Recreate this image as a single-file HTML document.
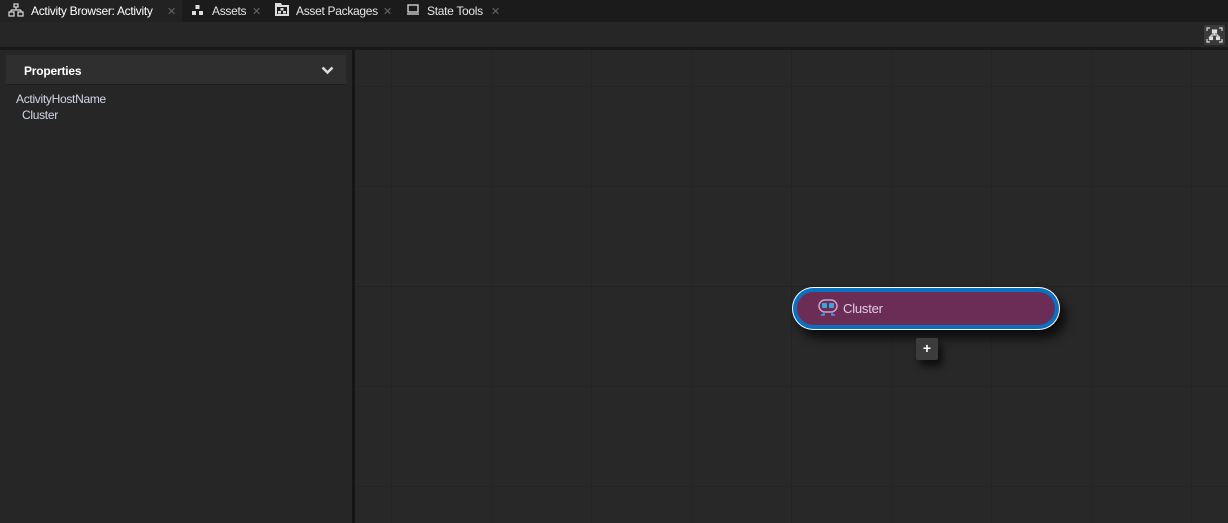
<!DOCTYPE html><html><head><style>
body{margin:0;width:1228px;height:523px;background:#262626;font-family:"Liberation Sans",sans-serif;overflow:hidden;position:relative;color:#ddd}
div{position:absolute;box-sizing:border-box}
.t{font-size:12px;top:4px;color:#e6e6e6;letter-spacing:-0.3px}
.x{font-size:11px;color:#666;top:5px}
</style></head><body>
<div style="left:0;top:0;width:1228px;height:22px;background:#1b1b1b"></div>
<div style="left:0;top:0;width:182px;height:22px;background:#222"></div>
<svg style="position:absolute;left:8px;top:3px" width="16" height="15" viewBox="0 0 16 15" fill="none" stroke="#ddd" stroke-width="1.2"><rect x="6" y="1" width="4" height="3"/><path d="M8 4v3M3 7h10M3 7v2M13 7v2"/><rect x="1" y="9" width="5" height="4"/><rect x="10" y="9" width="5" height="4"/></svg>
<div class="t" style="left:31px;color:#fff">Activity Browser: Activity</div>
<div class="x" style="left:167px">✕</div>
<svg style="position:absolute;left:192px;top:5px" width="11" height="11" viewBox="0 0 11 11" fill="#ddd"><rect x="3.5" y="0" width="4" height="4"/><rect x="0" y="6" width="4" height="4"/><rect x="7" y="6" width="4" height="4"/></svg>
<div class="t" style="left:212px">Assets</div>
<div class="x" style="left:252px">✕</div>
<svg style="position:absolute;left:275px;top:3px" width="14" height="13" viewBox="0 0 14 13" fill="#ddd"><path d="M0 0h6l1 2h7v11H0z"/><rect x="2" y="4" width="10" height="7" fill="#1b1b1b"/><rect x="5.5" y="5" width="3" height="2.5"/><rect x="3" y="8" width="3" height="2.5"/><rect x="8" y="8" width="3" height="2.5"/></svg>
<div class="t" style="left:296px">Asset Packages</div>
<div class="x" style="left:383px">✕</div>
<svg style="position:absolute;left:407px;top:4px" width="12" height="11" viewBox="0 0 12 11" fill="none" stroke="#ddd" stroke-width="1.3"><rect x="1" y="1" width="10" height="7"/><path d="M0 10h12"/></svg>
<div class="t" style="left:427px">State Tools</div>
<div class="x" style="left:491px">✕</div>
<div style="left:0;top:22px;width:1228px;height:25px;background:#262626"></div>
<div style="left:1204px;top:25px;width:21px;height:20px;background:#3a3a3a;border-radius:2px"></div>
<svg style="position:absolute;left:1206px;top:27px" width="17" height="16" viewBox="0 0 17 16" fill="none" stroke="#ddd" stroke-width="1.2"><path d="M1 4V1h3M13 1h3v3M1 12v3h3M13 15h3v-3"/><rect x="6.5" y="3" width="4" height="3" fill="#ddd"/><path d="M8.5 6v2M5 8h7M5 8v2M12 8v2"/><rect x="3.5" y="10" width="3" height="2.5" fill="#ddd"/><rect x="10.5" y="10" width="3" height="2.5" fill="#ddd"/></svg>
<div style="left:0;top:47px;width:1228px;height:3px;background:#191919"></div>
<div style="left:0;top:50px;width:352px;height:473px;background:#262626"></div>
<div style="left:6px;top:55px;width:340px;height:30px;background:#2f2f2f;border-bottom:1px solid #1e1e1e"></div>
<div style="left:24px;top:64px;font-size:12px;font-weight:bold;color:#fff;letter-spacing:-0.2px">Properties</div>
<svg style="position:absolute;left:321px;top:66px" width="13" height="9" viewBox="0 0 13 9"><path d="M1.5 1.5l5 5 5-5" stroke="#ddd" stroke-width="2.5" fill="none"/></svg>
<div style="left:16px;top:92px;font-size:12px;color:#cfd8e8;letter-spacing:-0.3px">ActivityHostName</div>
<div style="left:22px;top:108px;font-size:12px;color:#cfd8e8;letter-spacing:-0.3px">Cluster</div>
<div style="left:352px;top:50px;width:3px;height:473px;background:#151515"></div>
<div style="left:355px;top:50px;width:873px;height:473px;background:#282828;background-image:linear-gradient(90deg,#242424 1px,transparent 1px),linear-gradient(#242424 1px,transparent 1px);background-size:100px 100px;background-position:36px 36px"></div>
<div style="left:355px;top:286px;width:873px;height:1px;background:#222"></div>
<div style="left:791px;top:50px;width:1px;height:473px;background:#232323"></div>
<div style="left:792px;top:287px;width:268px;height:43px;border-radius:22px;background:#fff;box-shadow:6px 8px 10px rgba(0,0,0,.7)"></div>
<div style="left:793px;top:288px;width:266px;height:41px;border-radius:21px;background:#0a70c0"></div>
<div style="left:797px;top:292px;width:258px;height:33px;border-radius:17px;background:#6b2d55"></div>
<svg style="position:absolute;left:818px;top:299px" width="20" height="18" viewBox="0 0 20 18"><rect x="1" y="1" width="18" height="12" rx="6" fill="none" stroke="#d0a0c8" stroke-width="1.5"/><rect x="4" y="4" width="5" height="5" rx="1" fill="#3aa6e0"/><rect x="11" y="4" width="5" height="5" rx="1" fill="#3aa6e0"/><path d="M6 13v3H3M14 13v3h3" stroke="#3aa6e0" stroke-width="1.5" fill="none"/></svg>
<div style="left:843px;top:301px;font-size:13px;color:#e0cde0;letter-spacing:-0.2px">Cluster</div>
<div style="left:916px;top:338px;width:22px;height:22px;background:#3c3c3c;border-radius:2px;box-shadow:4px 6px 8px rgba(0,0,0,.7);color:#fff;font-size:14px;font-weight:bold;text-align:center;line-height:21px">+</div>
</body></html>
